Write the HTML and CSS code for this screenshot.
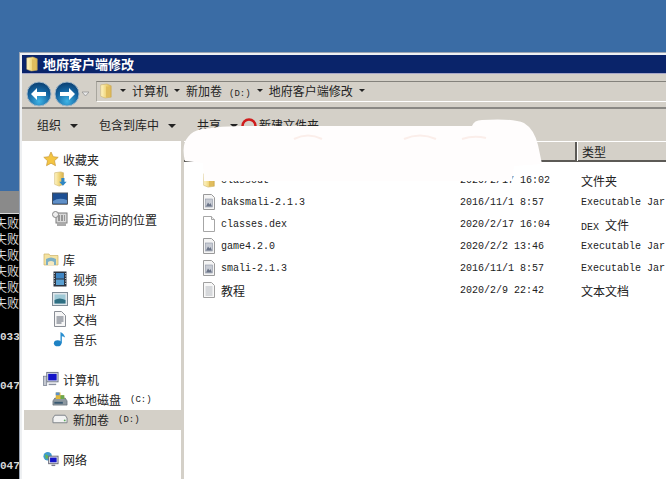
FILE: index.html
```html
<!DOCTYPE html>
<html lang="zh">
<head>
<meta charset="utf-8">
<title>地府客户端修改</title>
<link rel="stylesheet" href="styles.css">
</head>
<body>
<svg class="defs" width="0" height="0" aria-hidden="true">
  <defs>
    <linearGradient id="gFolder" x1="0" y1="0" x2="1" y2="0"><stop offset="0" stop-color="#fff6c8"/><stop offset=".5" stop-color="#f0d67c"/><stop offset="1" stop-color="#d9b14c"/></linearGradient>
    <radialGradient id="gOrb" cx=".5" cy=".8" r=".8"><stop offset="0" stop-color="#3fb4e6"/><stop offset=".6" stop-color="#14639f"/><stop offset="1" stop-color="#0b3d6e"/></radialGradient>
    <symbol id="i-folder" viewBox="0 0 16 18"><path d="M2 2l7-1 5 2v13l-7 1-5-2z" fill="url(#gFolder)" stroke="#c9ad60" stroke-width=".6"/><path d="M8 3.500l4 1v11l-4 1z" fill="#e0bd5e"/></symbol>
    <symbol id="i-jar" viewBox="0 0 16 16"><path d="M2.500 .5h8l3 3v12h-11z" fill="#f4f4f4" stroke="#9a9a9a"/><rect x="4.500" y="5" width="7" height="8" fill="#c8ccd4" stroke="#8f96a6" stroke-width=".6"/><path d="M5 12.500l2-4 1.500 2 1-1.500 1.500 3.500z" fill="#6b7488"/></symbol>
    <symbol id="i-page" viewBox="0 0 16 16"><path d="M2.500 .5h8l3 3v12h-11z" fill="#fff" stroke="#a6a6a6"/><path d="M10.500 .5v3h3" fill="#eee" stroke="#a6a6a6"/></symbol>
    <symbol id="i-text" viewBox="0 0 16 16"><path d="M2.500 .5h8l3 3v12h-11z" fill="#f8f8f8" stroke="#a0a0a0"/><path d="M4.500 5h7M4.500 7h7M4.500 9h7M4.500 11h7M4.500 13h7" stroke="#b4b8be"/></symbol>
    <symbol id="i-star" viewBox="0 0 16 16"><path d="M8 1l2.200 4.700 5 .6-3.700 3.400 1 5L8 12.200 3.500 14.700l1-5L.8 6.300l5-.6z" fill="#f4c542" stroke="#c79a3c" stroke-width=".7"/></symbol>
    <symbol id="i-down" viewBox="0 0 16 18"><path d="M2 2l7-1 3 1v13l-5 2-5-2z" fill="url(#gFolder)" stroke="#c9ad60" stroke-width=".6"/><path d="M9.500 8h3.500v4h2.500l-4.200 4.500L7 12h2.500z" fill="#2f86c4"/></symbol>
    <symbol id="i-desk" viewBox="0 0 16 14"><rect x=".5" y="1" width="15" height="11" fill="#1d4f93" stroke="#46505e"/><path d="M1 9q6-4 14-1v3.500H1z" fill="#5f8fc7"/><path d="M1 12.500h14" stroke="#777"/></symbol>
    <symbol id="i-recent" viewBox="0 0 16 16"><rect x="4" y="2" width="11" height="10" fill="#d8d8d8" stroke="#7d7d7d"/><path d="M6 5h7M6 7h7M6 9h7" stroke="#555" stroke-dasharray="2 1"/><circle cx="3.500" cy="3.500" r="3" fill="#eee" stroke="#888"/><rect x="5" y="12" width="9" height="3" fill="#aaa"/></symbol>
    <symbol id="i-lib" viewBox="0 0 16 16"><path d="M1 3h5l1 1.500h8V14H1z" fill="#f4e3a2" stroke="#cdb269" stroke-width=".7"/><path d="M3 14V8q5-3 10 0v6z" fill="#7fb0c4"/><path d="M5 14v-3q3-2 6 0v3z" fill="#f4e9c0"/></symbol>
    <symbol id="i-video" viewBox="0 0 14 16"><rect x=".5" y=".5" width="13" height="15" fill="#2c3440"/><rect x="3" y="2" width="8" height="5.500" fill="#3f86c4"/><rect x="3" y="8.500" width="8" height="5.500" fill="#5aa0d2"/><path d="M1.300 2v12M12.700 2v12" stroke="#dfe3e6" stroke-dasharray="1 1.500"/></symbol>
    <symbol id="i-pic" viewBox="0 0 16 14"><rect x=".5" y=".5" width="15" height="13" fill="#dfe6ea" stroke="#7f8c96"/><rect x="2.500" y="2.500" width="11" height="9" fill="#9fc9d6"/><path d="M2.500 8q5-3 11 0v3.500h-11z" fill="#2f6f82"/></symbol>
    <symbol id="i-doc" viewBox="0 0 14 16"><path d="M1.500 .5h7l4 4v11h-11z" fill="#f6f6f6" stroke="#8b8f96"/><path d="M3.500 6h7M3.500 8h7M3.500 10h7M3.500 12h5" stroke="#5a6270"/></symbol>
    <symbol id="i-music" viewBox="0 0 14 17"><ellipse cx="4.500" cy="13" rx="4" ry="3.300" fill="#1f82c4"/><path d="M7.500 13V1q4 2 5 6-2.500-1.500-3.500-1.500V13z" fill="#2a8fd0"/></symbol>
    <symbol id="i-pc" viewBox="0 0 17 16"><rect x="4" y="1" width="12" height="10" fill="#dfe3ea" stroke="#6a7284"/><rect x="5.500" y="2.500" width="9" height="7" fill="#1414c8"/><rect x=".5" y="5" width="3.500" height="10" fill="#c4c8d0" stroke="#6a7284" stroke-width=".7"/><path d="M6 13h8v1.500H6z" fill="#8a90a0"/></symbol>
    <symbol id="i-cdrive" viewBox="0 0 17 16"><path d="M1 10l2-3h11l2 3v4.500H1z" fill="#8d98a0" stroke="#5c6670" stroke-width=".7"/><rect x="2.500" y="11" width="9" height="2" fill="#3a5a72"/><path d="M4 1h5v3h4v4H4z" fill="#e0b83c"/><path d="M4 1h4v3H4z" fill="#5b8fc9"/><path d="M9 4h4v4H9z" fill="#6aa84f"/></symbol>
    <symbol id="i-ddrive" viewBox="0 0 17 10"><path d="M1 4l2-3h11l2 3v5H1z" fill="#f2f2f2" stroke="#7b8086"/><circle cx="13.500" cy="6.500" r="1" fill="#5cab5c"/></symbol>
    <symbol id="i-net" viewBox="0 0 17 16"><circle cx="5" cy="5" r="4.500" fill="#3f9bd0"/><path d="M2 3l3 1 1 3-3 1z" fill="#62b45a"/><rect x="6" y="5" width="10" height="8" fill="#e4e7ec" stroke="#667"/><rect x="7.500" y="6.500" width="7" height="5" fill="#1414c8"/><path d="M9 14h4v1.500H9z" fill="#778"/></symbol>
  </defs>
</svg>

<div class="console">
  <div class="console-title"></div>
  <div class="console-body">
    <div class="cline">失败</div>
    <div class="cline">失败</div>
    <div class="cline">失败</div>
    <div class="cline">失败</div>
    <div class="cline">失败</div>
    <div class="cline">失败</div>
    <div class="cnum cnum-a">033</div>
    <div class="cnum cnum-b">047</div>
    <div class="cnum cnum-c">047</div>
  </div>
</div>

<div class="window">
  <div class="titlebar">
    <svg class="title-icon"><use href="#i-folder"/></svg>
    <span>地府客户端修改</span>
  </div>
  <div class="addressbar">
    <svg class="nav-btns" width="64" height="26" viewBox="0 0 64 26">
      <circle cx="14" cy="13" r="12" fill="url(#gOrb)" stroke="#9fb6c8"/>
      <path d="M6 13l6-6v4h9v4h-9v4z" fill="#fff"/>
      <circle cx="42" cy="13" r="12" fill="url(#gOrb)" stroke="#9fb6c8"/>
      <path d="M50 13l-6-6v4h-9v4h9v4z" fill="#fff"/>
      <path d="M57 11h7l-3.500 4z" fill="#e8e8e8" stroke="#8c8c8c" stroke-width=".7"/>
    </svg>
    <div class="crumbs">
      <svg class="crumb-icon"><use href="#i-folder"/></svg>
      <i class="caret caret-first"></i>
      <span class="crumb">计算机</span><i class="caret"></i>
      <span class="crumb">新加卷<small class="drive">(D:)</small></span><i class="caret"></i>
      <span class="crumb">地府客户端修改</span><i class="caret"></i>
    </div>
  </div>
  <div class="toolbar">
    <span class="tool tool-org">组织<i class="caret"></i></span>
    <span class="tool tool-lib">包含到库中<i class="caret"></i></span>
    <span class="tool tool-share">共享<i class="caret"></i></span>
    <svg class="annot" width="16" height="16" viewBox="0 0 16 16"><circle cx="8" cy="9" r="6.500" fill="none" stroke="#d01c1c" stroke-width="2.500"/></svg>
    <span class="tool tool-new">新建文件夹</span>
  </div>
  <div class="content">
    <nav class="navpane">
      <div class="group">
        <div class="item head"><svg class="ico"><use href="#i-star"/></svg>收藏夹</div>
        <div class="item"><svg class="ico"><use href="#i-down"/></svg>下载</div>
        <div class="item"><svg class="ico"><use href="#i-desk"/></svg>桌面</div>
        <div class="item"><svg class="ico"><use href="#i-recent"/></svg>最近访问的位置</div>
      </div>
      <div class="group">
        <div class="item head"><svg class="ico"><use href="#i-lib"/></svg>库</div>
        <div class="item"><svg class="ico"><use href="#i-video"/></svg>视频</div>
        <div class="item"><svg class="ico"><use href="#i-pic"/></svg>图片</div>
        <div class="item"><svg class="ico"><use href="#i-doc"/></svg>文档</div>
        <div class="item"><svg class="ico"><use href="#i-music"/></svg>音乐</div>
      </div>
      <div class="group">
        <div class="item head"><svg class="ico"><use href="#i-pc"/></svg>计算机</div>
        <div class="item"><svg class="ico"><use href="#i-cdrive"/></svg>本地磁盘<small class="drive">(C:)</small></div>
        <div class="item selected"><svg class="ico"><use href="#i-ddrive"/></svg>新加卷<small class="drive">(D:)</small></div>
      </div>
      <div class="group">
        <div class="item head"><svg class="ico"><use href="#i-net"/></svg>网络</div>
      </div>
    </nav>
    <div class="filepane">
      <div class="row header">
        <span class="h-cell">名称</span>
        <span class="h-cell">修改日期</span>
        <span class="h-cell h-type">类型</span>
      </div>
      <div class="row"><span class="name"><svg class="ico"><use href="#i-folder"/></svg>classout</span><span>2020/2/17 16:02</span><span class="cjk">文件夹</span></div>
      <div class="row"><span class="name"><svg class="ico"><use href="#i-jar"/></svg>baksmali-2.1.3</span><span>2016/11/1 8:57</span><span>Executable Jar File</span></div>
      <div class="row"><span class="name"><svg class="ico"><use href="#i-page"/></svg>classes.dex</span><span>2020/2/17 16:04</span><span>DEX <b class="cjk">文件</b></span></div>
      <div class="row"><span class="name"><svg class="ico"><use href="#i-jar"/></svg>game4.2.0</span><span>2020/2/2 13:46</span><span>Executable Jar File</span></div>
      <div class="row"><span class="name"><svg class="ico"><use href="#i-jar"/></svg>smali-2.1.3</span><span>2016/11/1 8:57</span><span>Executable Jar File</span></div>
      <div class="row"><span class="name"><svg class="ico"><use href="#i-text"/></svg><b class="cjk">教程</b></span><span>2020/2/9 22:42</span><span class="cjk">文本文档</span></div>
    </div>
  </div>
</div>

<svg class="blob" width="380" height="75" viewBox="0 0 380 75" aria-hidden="true">
  <path d="M20 12 Q40 9 60 9 L290 9 Q292 3 300 3 Q330 1 342 6 Q352 12 356 28 L360 47 L332 49 L330 64 L22 64 L21 46 L3 44 Q-1 28 6 20 Q10 14 20 12z" fill="#fffdfd"/>
  <path d="M112 22q14-7 28 0M222 22q16-7 32 0M280 22q12-4 24-1" fill="none" stroke="#fbeeea" stroke-width="2"/>
</svg>
</body>
</html>
```
FILE: styles.css
```css
html, body {
  margin: 0;
  height: 479px;
  overflow: hidden;
  background: #3a6ca5;
  font-family: "Noto Sans CJK SC", "Liberation Sans", sans-serif;
  font-size: 12px;
  color: #222;
}

.defs { position: absolute; }

/* background console window, clipped by the explorer window */
.console {
  position: absolute;
  left: 0;
  top: 191px;
  width: 19px;
  height: 288px;
  overflow: hidden;
  background: #000;
}
.console-title {
  height: 22px;
  background: #8a8a8a;
  border-bottom: 1px solid #d8d8d8;
  margin-bottom: 1px;
}
.console-body { color: #dcdcdc; }
.cline {
  height: 16px;
  line-height: 16px;
  white-space: nowrap;
  display: flex;
  justify-content: flex-end;
  font-size: 12px;
}
.cnum {
  height: 16px;
  font: bold 11px/16px "Liberation Mono", monospace;
  color: #d8d8d8;
  white-space: nowrap;
}
.cnum-a { margin-top: 18px; }
.cnum-b { margin-top: 33px; }
.cnum-c { margin-top: 64px; }

/* explorer window */
.window {
  position: absolute;
  left: 19px;
  top: 52px;
  width: 660px;
  height: 440px;
  box-sizing: border-box;
  background: #d4d0c8;
  border: solid #eef0f2;
  border-width: 3px 0 0 3px;
  outline: 1px solid #9aa5b5;
  outline-offset: -1px;
}

.titlebar {
  height: 18px;
  background: #0a246a;
  border-bottom: 1px solid #a6a6c8;
  color: #fff;
  font-weight: 700;
  font-size: 13px;
  line-height: 18px;
  display: flex;
  align-items: center;
  gap: 4px;
  padding-left: 3px;
}
.title-icon { width: 14px; height: 16px; }

.addressbar {
  height: 35px;
  box-sizing: border-box;
  padding: 7px 0 0 4px;
  display: flex;
  align-items: flex-start;
  border-bottom: 2px solid #8a8884;
}
.nav-btns { flex: none; margin: 0 6px 0 -1px; }
.crumbs {
  flex: 1;
  height: 21px;
  box-sizing: border-box;
  margin-left: 1px;
  border-top: 1px solid #84827c;
  border-left: 1px solid #a8a69e;
  border-bottom: 1px solid #fff;
  display: flex;
  align-items: center;
  color: #222;
  white-space: nowrap;
  padding-bottom: 2px;
}
.crumb-icon { width: 14px; height: 18px; margin-left: 2px; }
.caret {
  display: inline-block;
  width: 0;
  height: 0;
  border: solid transparent;
  border-width: 3px 3px 0;
  border-top-color: #222;
  margin: 0 6px;
  vertical-align: middle;
}
.caret-first { margin: 0 6px 0 7px; }
.drive {
  font: 9px "Liberation Mono", monospace;
  margin-left: 9px;
}
.crumbs .drive { margin-left: 7px; }

.toolbar {
  height: 32px;
  box-sizing: border-box;
  padding: 0 0 2px 15px;
  display: flex;
  align-items: center;
  white-space: nowrap;
}
.toolbar .caret { border-width: 4px 4px 0; margin: 0 0 0 9px; }
.tool-org { width: 62px; }
.tool-lib { width: 98px; }
.tool-share { width: 44px; }
.annot { margin: 2px 2px 0 0; }

.content {
  display: flex;
  height: 340px;
  background: #fff;
}
.navpane {
  width: 162px;
  flex: none;
  box-sizing: border-box;
  padding: 9px 0 0 2px;
  border-right: 3px solid #d4d0c8;
}
.group { margin-bottom: 20px; }
.item {
  height: 20px;
  box-sizing: border-box;
  padding: 0 0 2px 28px;
  display: flex;
  align-items: center;
  white-space: nowrap;
}
.item .ico { width: 16px; height: 16px; margin-right: 5px; flex: none; }
.item.head { padding-left: 19px; }
.item.head .ico { margin-right: 4px; }
.item.selected { background: #d4d0c8; }
.item .drive { margin-top: 2px; }

.filepane {
  flex: 1;
  font: 10px "Liberation Mono", monospace;
}
.row {
  display: grid;
  grid-template-columns: 276px 121px 1fr;
  height: 22px;
  align-items: center;
  white-space: nowrap;
}
.row:nth-child(2) { margin-top: 7px; }
.cjk {
  font: 12px "Noto Sans CJK SC", sans-serif;
}
.name {
  display: flex;
  align-items: center;
  padding-left: 17px;
}
.name .ico { width: 16px; height: 16px; margin-right: 4px; flex: none; }
.header {
  height: 21px;
  background: #d4d0c8;
  border-top: 1px solid #fff;
  border-bottom: 2px solid #5c5a56;
  box-sizing: border-box;
  font: 12px "Noto Sans CJK SC", sans-serif;
}
.h-type {
  border-left: 2px solid #5c5a56;
  box-shadow: inset 1px 0 0 #fff;
  margin-left: -6px;
  padding-left: 5px;
  height: 19px;
  line-height: 19px;
}

/* smudge that was painted over the screenshot */
.blob {
  position: absolute;
  left: 182px;
  top: 117px;
}
```
